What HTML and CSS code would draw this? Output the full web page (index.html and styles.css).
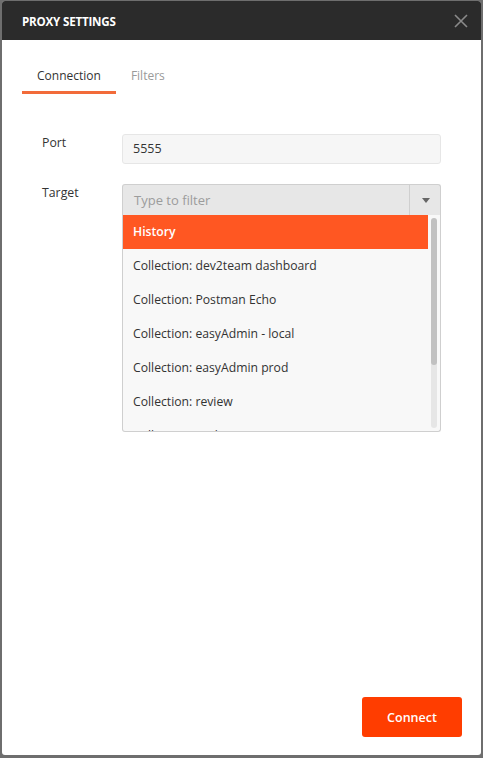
FILE: index.html
```html
<!DOCTYPE html>
<html>
<head>
<meta charset="utf-8">
<link rel="stylesheet" href="styles.css">
</head>
<body>
<div class="modal">
  <div class="modal-header">
    <span class="title">PROXY SETTINGS</span>
    <svg class="close" width="14" height="14" viewBox="0 0 14 14"><path d="M1 1L13 13M13 1L1 13" stroke="#8a8a8a" stroke-width="1.6" fill="none"/></svg>
  </div>
  <div class="modal-body">
    <div class="tabs">
      <div class="tab active">Connection</div>
      <div class="tab">Filters</div>
    </div>
    <div class="form">
      <div class="row">
        <div class="label">Port</div>
        <div class="field"><div class="input">5555</div></div>
      </div>
      <div class="row">
        <div class="label">Target</div>
        <div class="field">
          <div class="select">
            <div class="placeholder">Type to filter</div>
            <div class="arrow"><span class="caret"></span></div>
          </div>
          <div class="dropdown">
            <div class="items">
              <div class="item selected">History</div>
              <div class="item">Collection: dev2team dashboard</div>
              <div class="item">Collection: Postman Echo</div>
              <div class="item">Collection: easyAdmin - local</div>
              <div class="item">Collection: easyAdmin prod</div>
              <div class="item">Collection: review</div>
              <div class="item">Collection: OiThere</div>
            </div>
            <div class="scrollbar"><div class="thumb"></div></div>
          </div>
        </div>
      </div>
    </div>
  </div>
  <div class="modal-footer">
    <button class="btn">Connect</button>
  </div>
</div>
</body>
</html>
```

FILE: styles.css
```css
html, body {
  margin: 0;
  padding: 0;
}
body {
  background: #6e6e6e;
  padding: 1px 2px 3px 2px;
  font-family: "Open Sans", "Liberation Sans", sans-serif;
  box-sizing: border-box;
  height: 758px;
}
.modal {
  width: 479px;
  height: 754px;
  background: #ffffff;
  border-radius: 3px;
  display: flex;
  flex-direction: column;
  overflow: hidden;
}
.modal-header {
  height: 39px;
  background: #2b2b2b;
  display: flex;
  align-items: center;
  justify-content: space-between;
  padding: 0 13px 0 20px;
  flex-shrink: 0;
}
.title {
  color: #ffffff;
  font-size: 11.6px;
  font-weight: 700;
  letter-spacing: -0.2px;
  margin-top: 1px;
}
.close {
  display: block;
}
.modal-body {
  flex: 1;
}
.tabs {
  display: flex;
  padding: 27px 0 0 20px;
}
.tab {
  padding: 0 15px 6px;
  font-size: 12px;
  line-height: 18px;
  color: #9a9a9a;
  border-bottom: 3px solid transparent;
}
.tab.active {
  color: #333333;
  border-bottom-color: #f26b3a;
}
.form {
  padding: 40px 40px 0 40px;
  display: flex;
  flex-direction: column;
  gap: 20px;
}
.row {
  display: flex;
  align-items: flex-start;
}
.label {
  width: 80px;
  font-size: 12.3px;
  line-height: 16px;
  margin-top: 1px;
  color: #333333;
  flex-shrink: 0;
}
.field {
  flex: 1;
}
.input {
  height: 30px;
  box-sizing: border-box;
  border: 1px solid #e6e6e6;
  background: #f6f6f6;
  border-radius: 3px;
  padding: 0 10px;
  font-size: 12.5px;
  line-height: 30px;
  color: #333333;
  display: flex;
  align-items: center;
}
.select {
  height: 31px;
  box-sizing: border-box;
  border: 1px solid #cfcfcf;
  border-bottom: none;
  background: #e7e7e7;
  border-radius: 3px 3px 0 0;
  display: flex;
  align-items: center;
}
.placeholder {
  flex: 1;
  padding-left: 11px;
  font-size: 13px;
  color: #9c9c9c;
}
.arrow {
  width: 30px;
  height: 100%;
  border-left: 1px solid #cfcfcf;
  display: flex;
  align-items: center;
  justify-content: center;
}
.caret {
  width: 0;
  height: 0;
  border-left: 4px solid transparent;
  border-right: 4px solid transparent;
  border-top: 5px solid #666666;
  margin-left: 1px;
}
.dropdown {
  height: 217px;
  box-sizing: border-box;
  border: 1px solid #cfcfcf;
  border-top: none;
  background: #f8f8f8;
  border-radius: 0 0 3px 3px;
  display: flex;
  overflow: hidden;
}
.items {
  flex: 1;
  overflow: hidden;
}
.item {
  height: 34px;
  line-height: 34px;
  padding-left: 10px;
  font-size: 12.2px;
  color: #333333;
  white-space: nowrap;
}
.item.selected {
  background: #ff5722;
  color: #ffffff;
  font-weight: 600;
}
.scrollbar {
  width: 12px;
  padding: 3px;
  box-sizing: border-box;
  display: flex;
}
.scrollbar .thumb {
  width: 6px;
  height: 147px;
  background: #c1c1c1;
  border-radius: 3px;
  box-shadow: 0 63px 0 0 #e6e6e6;
}
.modal-footer {
  display: flex;
  justify-content: flex-end;
  padding: 0 19px 18px 0;
}
.btn {
  width: 100px;
  height: 40px;
  background: #ff3d00;
  color: #ffffff;
  border: none;
  border-radius: 3px;
  font-family: "Open Sans", "Liberation Sans", sans-serif;
  font-size: 12.5px;
  font-weight: 600;
  cursor: pointer;
}
```
